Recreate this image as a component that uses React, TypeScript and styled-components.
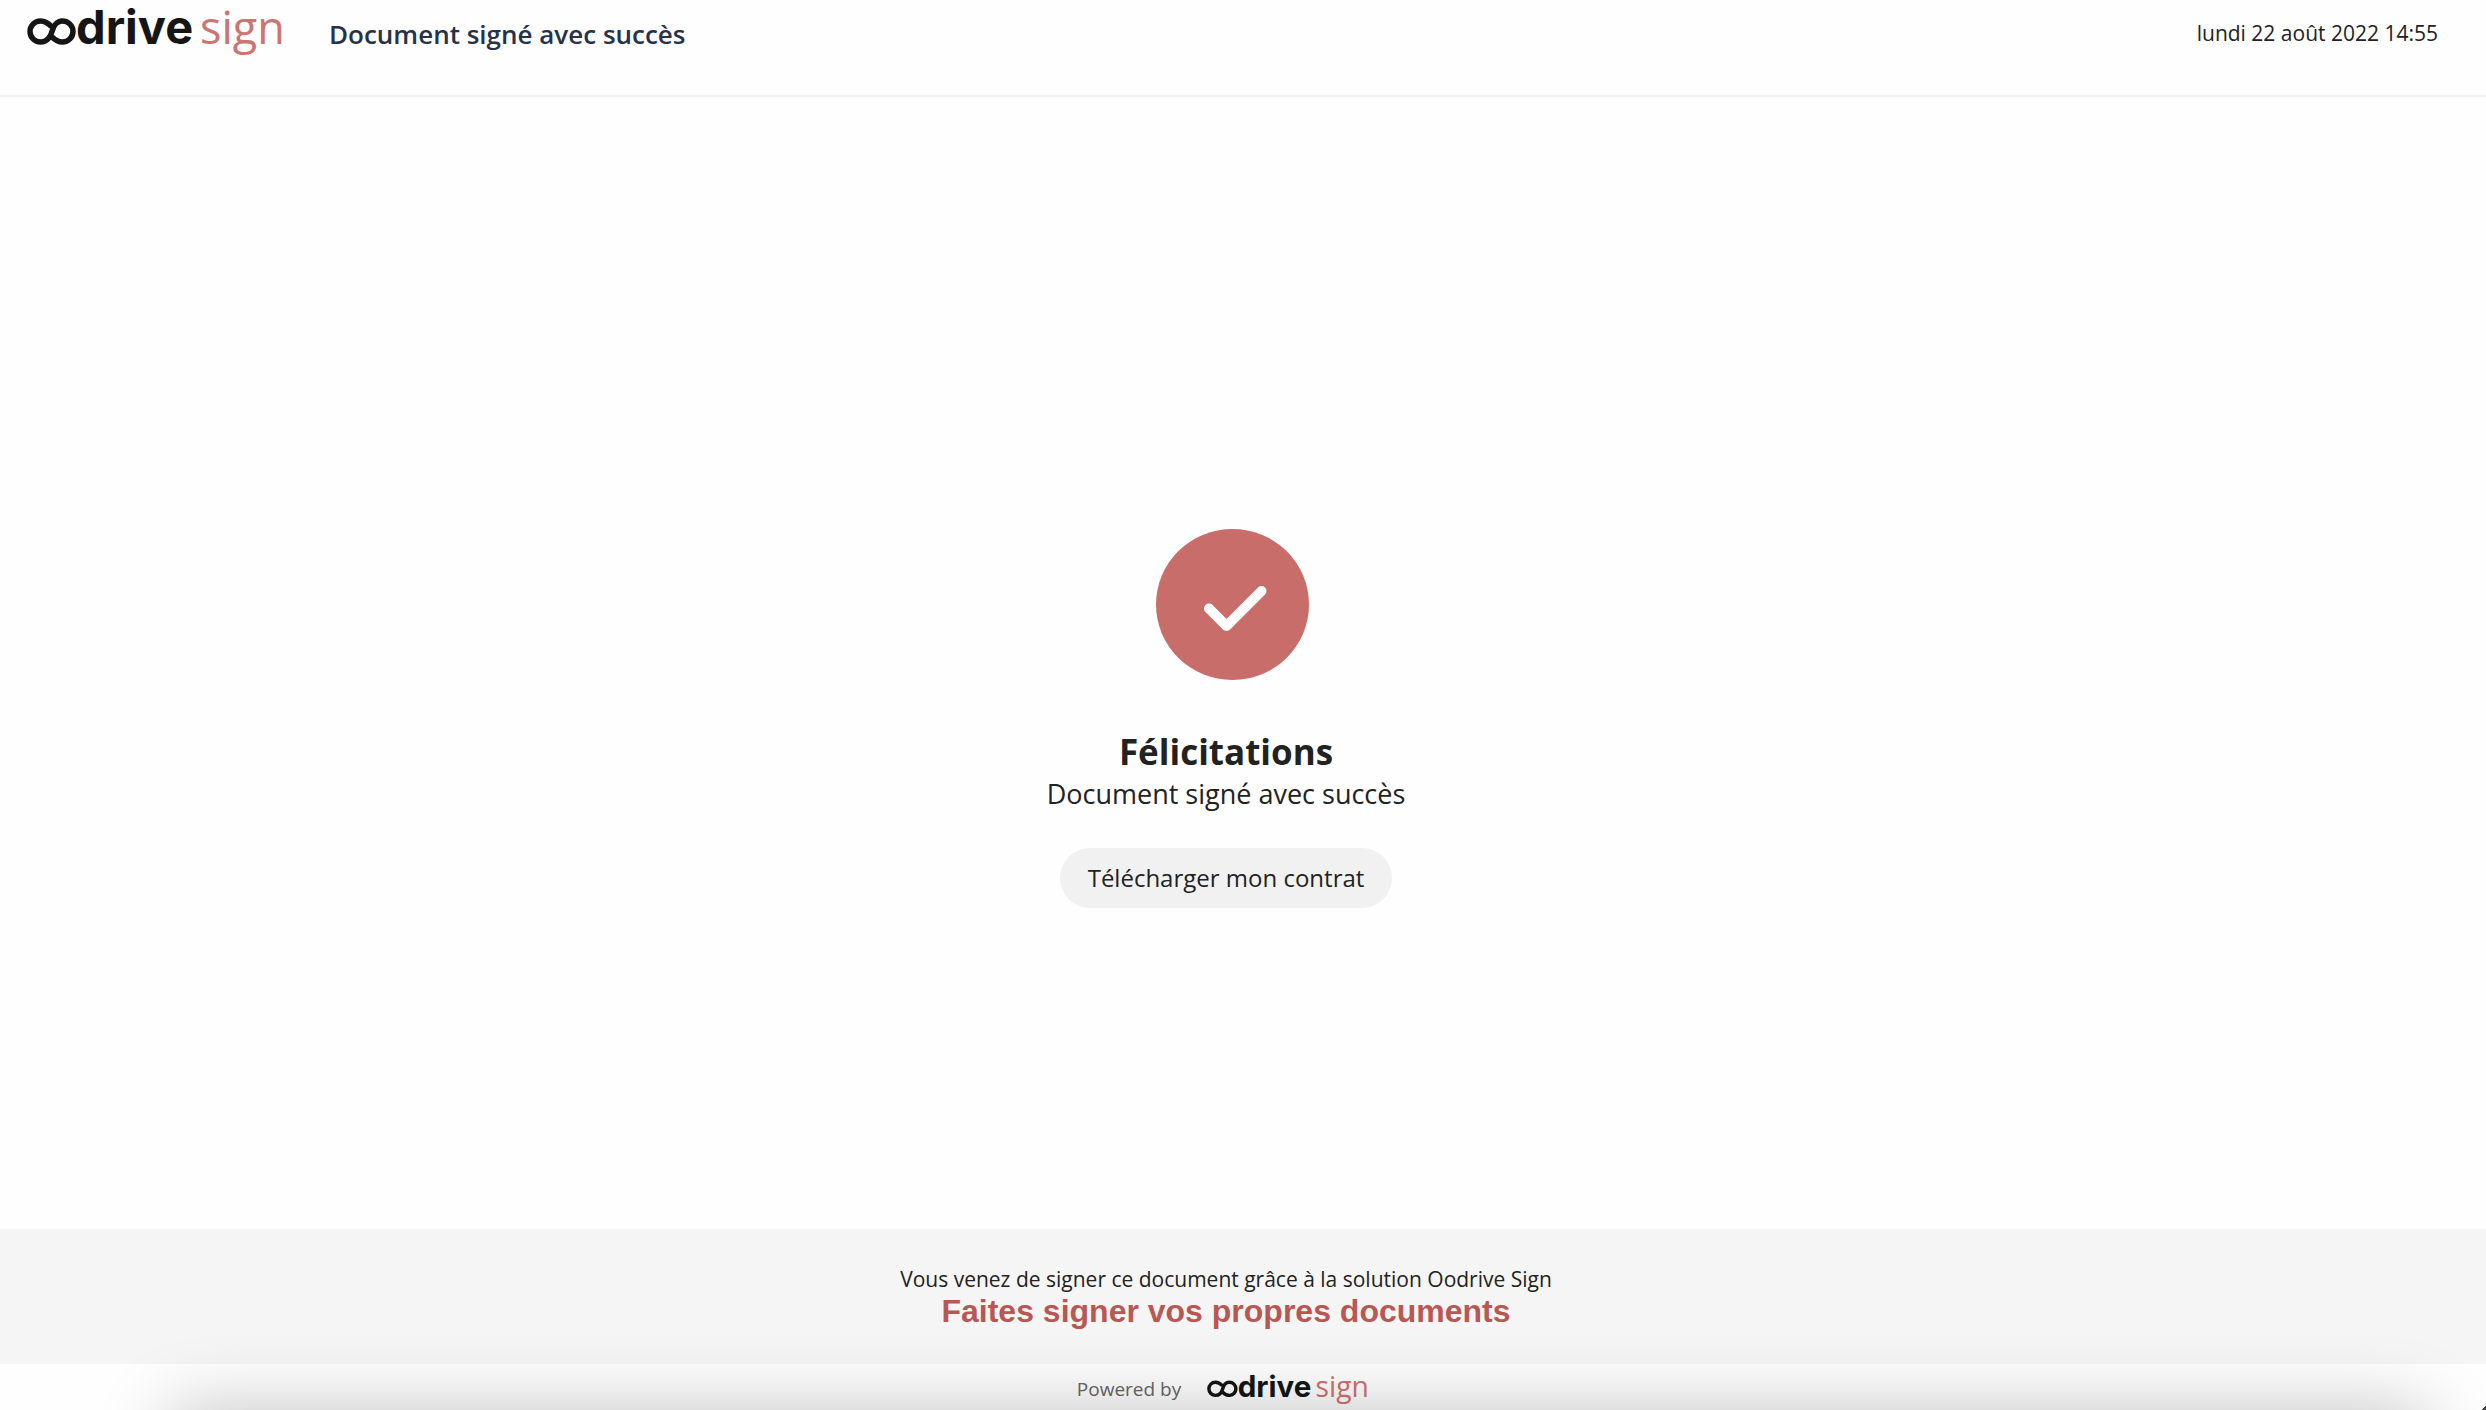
import React from "react";
import styled, { createGlobalStyle } from "styled-components";

const GlobalStyle = createGlobalStyle`
  *, *::before, *::after { box-sizing: border-box; }
  body { margin: 0; background: #fefefe; }
`;

const Page = styled.div`
  position: relative;
  display: flex;
  flex-direction: column;
  min-height: 100vh;
  overflow: hidden;
  color: #222;
  font-family: "Open Sans", "Noto Sans", sans-serif;
`;

const Header = styled.header`
  display: flex;
  align-items: flex-start;
  justify-content: space-between;
  height: 97px;
  padding: 0 48px 0 27px;
  border-bottom: 2px solid #efefef;
`;

const Brand = styled.div`
  display: flex;
  align-items: flex-start;
  gap: 44px;
`;

const LogoSvg = styled.svg<{ $width: number }>`
  display: block;
  flex: none;
  width: ${(p) => p.$width}px;
  height: auto;
  overflow: visible;
`;

const HeaderTitle = styled.h1`
  margin: 16px 0 0;
  color: #25324a;
  font-size: 26px;
  font-weight: 600;
  line-height: 36px;
`;

const DateText = styled.time`
  margin-top: 16px;
  font-size: 21px;
  line-height: 34px;
`;

const Main = styled.main`
  flex: 1;
  display: flex;
  flex-direction: column;
  align-items: center;
  justify-content: center;
  padding: 110px 34px 0 0;
`;

const SuccessIcon = styled.svg`
  display: block;
  width: 166px;
  height: 151px;
`;

const Heading = styled.h2`
  margin: 48px 0 0;
  font-size: 35px;
  font-weight: 700;
  line-height: 48px;
`;

const Message = styled.p`
  margin: 0;
  font-size: 27px;
  line-height: 36px;
`;

const DownloadButton = styled.button`
  margin-top: 36px;
  padding: 12px 28px;
  border: 0;
  border-radius: 30px;
  background: #f1f1f1;
  color: inherit;
  font: inherit;
  font-size: 24px;
  line-height: 36px;
  cursor: pointer;
`;

const Promo = styled.section`
  display: flex;
  flex-direction: column;
  align-items: center;
  height: 135px;
  padding: 34px 34px 0 0;
  background: #f5f5f5;
`;

const PromoText = styled.p`
  margin: 0;
  font-size: 21px;
  line-height: 32px;
`;

const PromoLink = styled.a`
  color: #b95753;
  font-family: "Liberation Sans", Arial, sans-serif;
  font-size: 32px;
  font-weight: 700;
  line-height: 32px;
  text-decoration: none;
`;

const Footer = styled.footer`
  display: flex;
  align-items: flex-start;
  justify-content: center;
  gap: 26px;
  height: 46px;
  padding: 5px 40px 0 0;
`;

const PoweredBy = styled.span`
  margin-top: 4px;
  color: #666;
  font-size: 19px;
  line-height: 32px;
`;

const BottomShade = styled.div`
  position: absolute;
  top: 100%;
  left: 170px;
  right: 60px;
  height: 160px;
  box-shadow: 0 0 75px rgba(0, 0, 0, 0.24);
  pointer-events: none;
`;

const Corner = styled.div`
  position: absolute;
  right: 0;
  bottom: 0;
  width: 4px;
  height: 4px;
  background: linear-gradient(135deg, transparent 50%, #444 50%);
`;

function Logo({ width }: { width: number }) {
  return (
    <LogoSvg $width={width} viewBox="0 0 258 60" role="img" aria-label="oodrive sign">
      <path
        d="M24.500 26.500C20.500 22.500 17.500 21 13.500 21a10.500 10.500 0 0 0 0 21C21 42 24 35.500 25 31.500S29 21 35.500 21a10.500 10.500 0 0 1 0 21C31.500 42 28.500 40.500 24.500 36.500"
        fill="none"
        stroke="#151515"
        strokeWidth="5.500"
      />
      <text x="49" y="44" fill="#151515" fontFamily="Inter, sans-serif" fontSize="47" fontWeight="700">
        drive
      </text>
      <text x="173" y="44" fill="#cd7471" fontFamily="'Open Sans', sans-serif" fontSize="45">
        sign
      </text>
    </LogoSvg>
  );
}

export default function App() {
  return (
    <>
      <GlobalStyle />
      <Page>
        <Header>
          <Brand>
            <Logo width={258} />
            <HeaderTitle>Document signé avec succès</HeaderTitle>
          </Brand>
          <DateText dateTime="2022-08-22T14:55">lundi 22 août 2022 14:55</DateText>
        </Header>
        <Main>
          <SuccessIcon viewBox="0 0 166 151" aria-hidden="true">
            <ellipse cx="89.500" cy="75.500" rx="76.500" ry="75.500" fill="#c96d6a" />
            <path
              d="M66 79.500l17.500 17.500 35-35"
              fill="none"
              stroke="#fff"
              strokeWidth="10"
              strokeLinecap="round"
              strokeLinejoin="round"
            />
          </SuccessIcon>
          <Heading>Félicitations</Heading>
          <Message>Document signé avec succès</Message>
          <DownloadButton type="button">Télécharger mon contrat</DownloadButton>
        </Main>
        <Promo>
          <PromoText>Vous venez de signer ce document grâce à la solution Oodrive Sign</PromoText>
          <PromoLink href="#">Faites signer vos propres documents</PromoLink>
        </Promo>
        <Footer>
          <PoweredBy>Powered by</PoweredBy>
          <Logo width={162} />
        </Footer>
        <BottomShade />
        <Corner />
      </Page>
    </>
  );
}
